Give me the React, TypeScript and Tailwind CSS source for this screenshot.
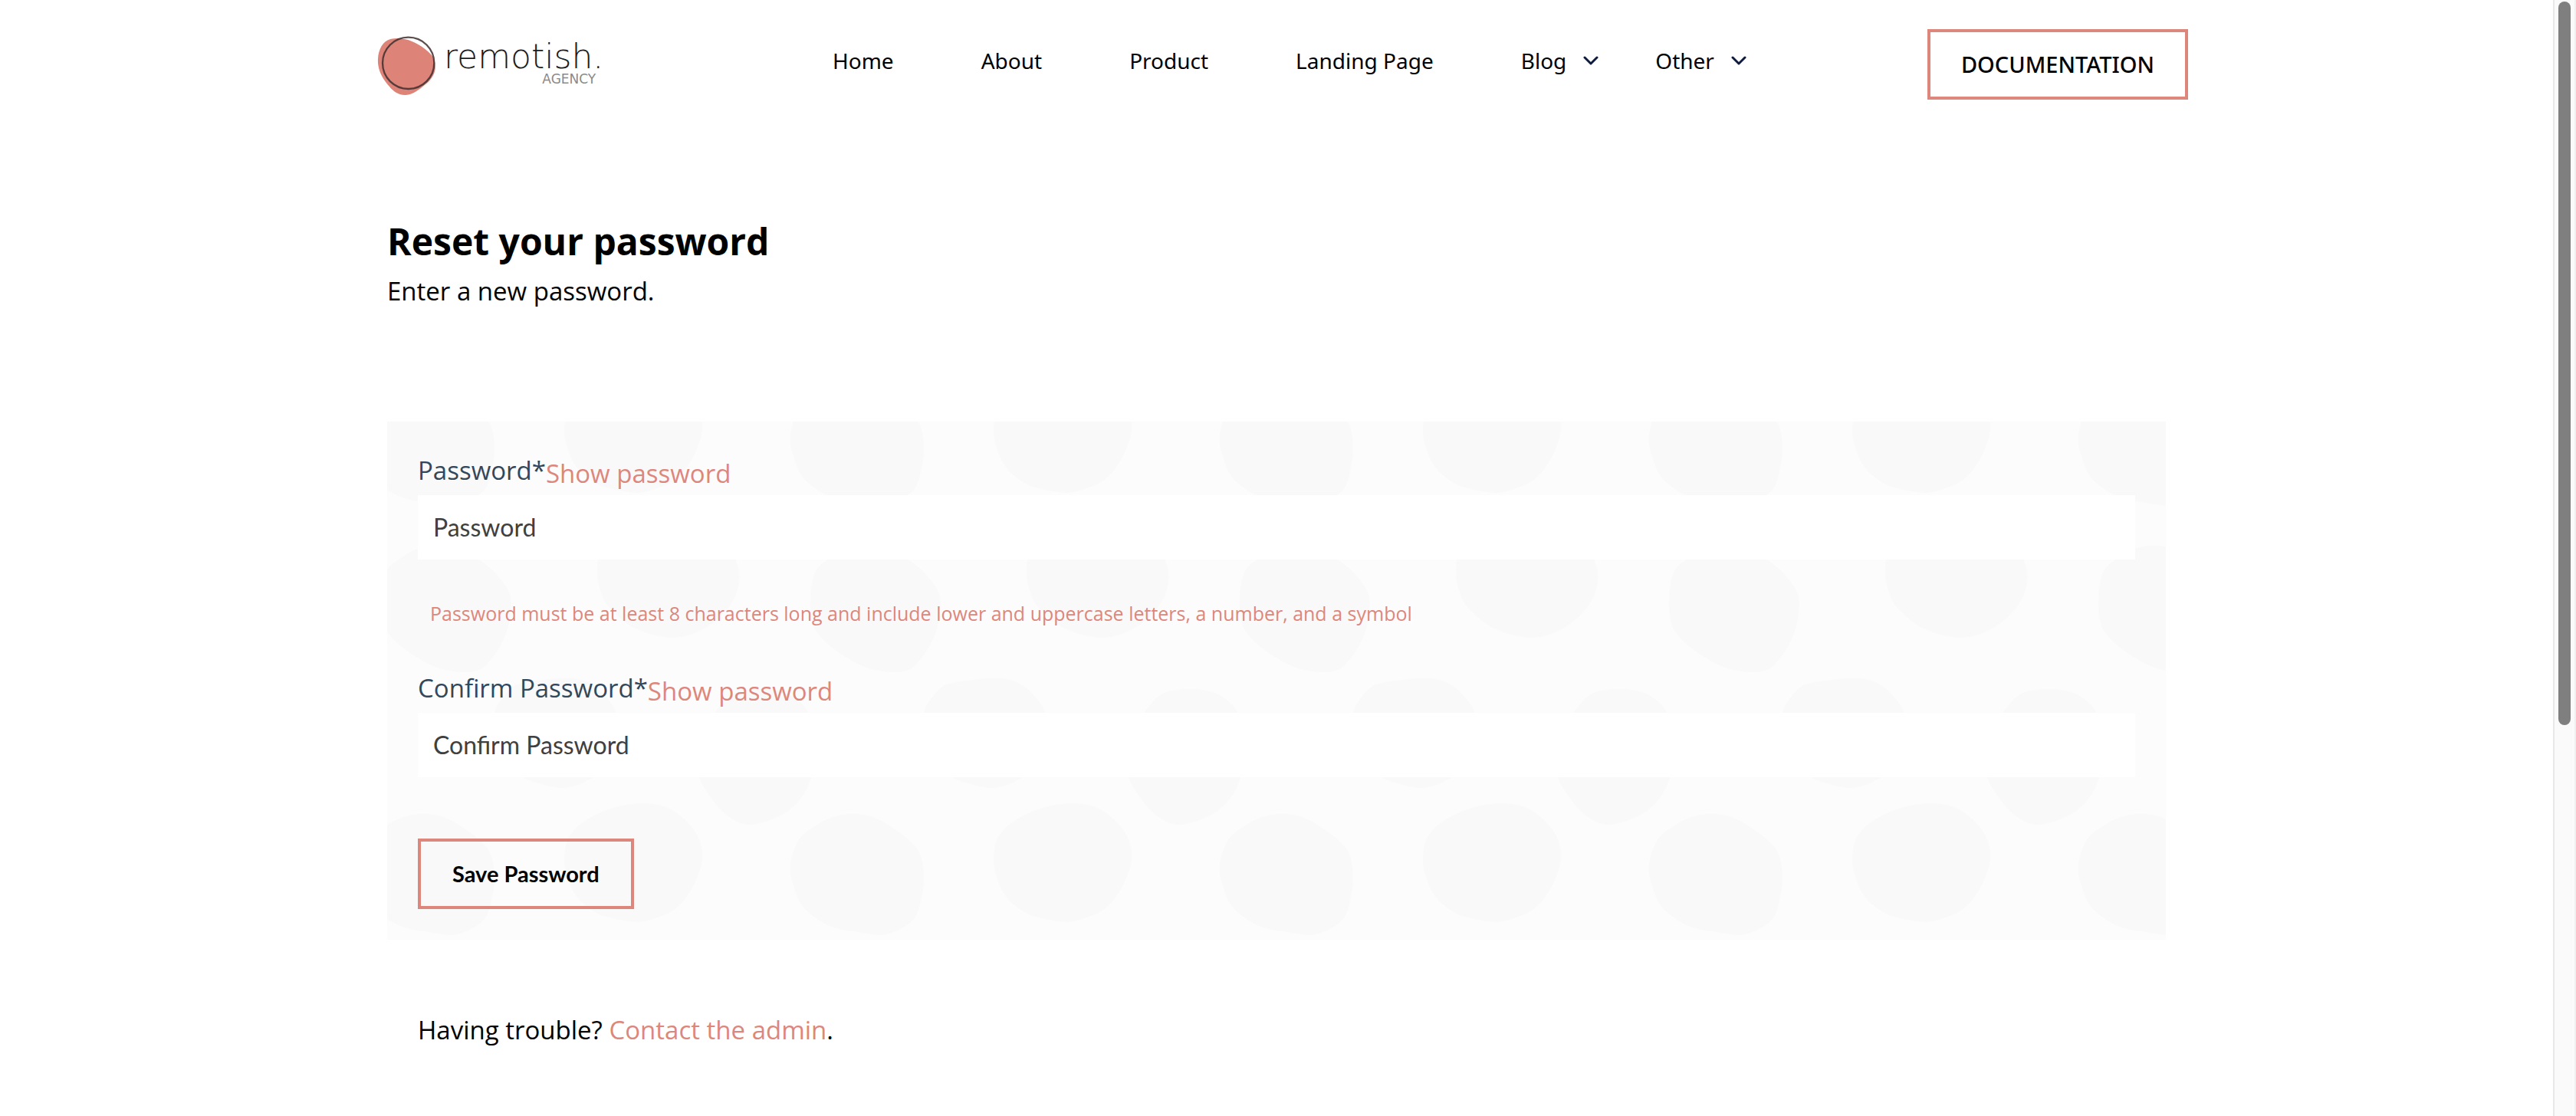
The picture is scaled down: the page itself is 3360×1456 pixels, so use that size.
import { useState } from "react";

type Point = [number, number];

const BLOBS: Point[][] = [
  [[336, 498], [364, 503], [389, 520], [406, 543], [411, 572], [397, 610], [374, 637], [339, 651], [316, 652], [277, 643], [249, 622], [236, 597], [231, 573], [235, 546], [249, 528], [274, 512], [306, 501]],
  [[607, 512], [634, 516], [664, 533], [691, 557], [700, 587], [697, 620], [686, 650], [651, 669], [614, 666], [577, 658], [544, 635], [529, 603], [526, 577], [536, 547], [554, 530], [581, 516]],
  [[274, 193], [278, 220], [290, 243], [324, 270], [374, 282], [417, 268], [447, 240], [459, 210], [455, 182], [435, 148], [400, 122], [355, 116], [310, 125], [282, 155]],
  [[552, 227], [554, 260], [567, 283], [599, 308], [631, 323], [660, 327], [684, 322], [705, 297], [718, 267], [721, 230], [709, 207], [684, 183], [645, 164], [605, 164], [572, 182], [558, 197]],
  [[229, 478], [269, 464], [295, 440], [304, 410], [298, 379], [288, 362], [267, 343], [242, 335], [204, 337], [170, 343], [153, 357], [140, 379], [139, 405], [150, 440], [176, 464]],
  [[492, 349], [517, 353], [535, 363], [549, 379], [556, 410], [557, 440], [553, 464], [542, 488], [517, 512], [474, 526], [445, 515], [424, 493], [407, 464], [405, 430], [414, 398], [428, 379], [444, 360], [463, 351]],
];

/** Closed Catmull-Rom curve through the given points. */
function smoothPath(points: Point[]) {
  const n = points.length;
  const at = (i: number) => points[(i + n) % n];
  let d = `M${points[0][0]} ${points[0][1]}`;
  for (let i = 0; i < n; i++) {
    const [a, b, c, e] = [at(i - 1), at(i), at(i + 1), at(i + 2)];
    d += `C${b[0] + (c[0] - a[0]) / 6} ${b[1] + (c[1] - a[1]) / 6} ${c[0] - (e[0] - b[0]) / 6} ${c[1] - (e[1] - b[1]) / 6} ${c[0]} ${c[1]}`;
  }
  return d + "Z";
}

const BLOB_PATH = BLOBS.map(smoothPath).join("");

function BlobBackground() {
  return (
    <svg className="pointer-events-none absolute inset-0 h-full w-full" aria-hidden="true">
      <defs>
        <pattern id="blobs" width="560" height="560" patternUnits="userSpaceOnUse">
          <g fill="#f9f9f9">
            <path d={BLOB_PATH} />
            <path d={BLOB_PATH} transform="translate(-560 0)" />
            <path d={BLOB_PATH} transform="translate(0 -560)" />
            <path d={BLOB_PATH} transform="translate(-560 -560)" />
          </g>
        </pattern>
      </defs>
      <rect width="100%" height="100%" fill="url(#blobs)" />
    </svg>
  );
}

function Logo() {
  return (
    <a href="#" className="flex w-[594px] shrink-0 items-start gap-2.5" aria-label="remotish agency">
      <svg viewBox="37 48 231 237" className="mt-2 h-[79px] w-[77px]" aria-hidden="true">
        <path
          d="M92 62C112 58 138 60 158 66C192 78 236 104 256 134C266 158 266 176 262 190C254 216 236 234 216 248C192 268 168 282 146 282C112 282 88 256 68 228C48 200 38 170 40 140C42 104 58 70 92 62Z"
          fill="#dd8377"
        />
        <circle cx="159" cy="157" r="101" fill="none" stroke="#3f2f30" strokeOpacity="0.85" strokeWidth="7" />
      </svg>
      <span className="flex flex-col items-end font-['DejaVu_Sans',sans-serif]">
        <span className="mt-2 text-[44px] leading-[56px] font-extralight text-[#1c1c1c]">remotish.</span>
        <span className="-mt-2 mr-2.5 text-[17px] leading-[18px] text-[#8a8a8a]">AGENCY</span>
      </span>
    </a>
  );
}

function Chevron() {
  return (
    <svg viewBox="0 0 20 12" className="h-3 w-5" fill="none" stroke="#0d1b3e" strokeWidth="3" strokeLinecap="round" strokeLinejoin="round" aria-hidden="true">
      <path d="M2 2l8 8 8-8" />
    </svg>
  );
}

function Header() {
  return (
    <header className="mx-auto flex w-full max-w-[2378px] items-start pt-[38px] pl-4">
      <Logo />
      <nav className="flex gap-[114px] pt-[21px] text-[28px] leading-10">
        <a href="#">Home</a>
        <a href="#">About</a>
        <a href="#">Product</a>
        <a href="#">Landing Page</a>
        <div className="flex gap-[74px]">
          <a href="#" className="flex items-center gap-[22px]">Blog <Chevron /></a>
          <a href="#" className="flex items-center gap-[22px]">Other <Chevron /></a>
        </div>
      </nav>
      <a href="#" className="ml-auto flex h-[92px] items-center border-4 border-[#dd877c] px-10 text-[29px] font-medium">
        DOCUMENTATION
      </a>
    </header>
  );
}

function PasswordField({ id, label }: { id: string; label: string }) {
  const [shown, setShown] = useState(false);
  return (
    <div>
      <div className="flex h-[55px] items-start">
        <label htmlFor={id} className="text-[#33475b]">{label}*</label>
        <button type="button" className="mt-1 text-[#dd877c]" onClick={() => setShown(!shown)}>
          Show password
        </button>
      </div>
      <input
        id={id}
        type={shown ? "text" : "password"}
        placeholder={label}
        className="block h-[84px] w-full bg-white px-5 pb-0.5 font-['Lato',sans-serif] text-[32px] text-[#404040] outline-none placeholder:text-[#404040]"
      />
    </div>
  );
}

function Scrollbar() {
  return (
    <div className="w-[30px] shrink-0 border-x-2 border-l-[#e8e8e8] border-r-[#f0f0f0] bg-[#fafafa] pt-0.5" aria-hidden="true">
      <div className="mx-auto h-[944px] w-4 rounded-full bg-[#7f7f7f]" />
    </div>
  );
}

export default function App() {
  return (
    <div className="flex min-h-screen bg-white font-['Noto_Sans','Open_Sans',sans-serif] text-black">
      <div className="min-w-0 flex-1">
        <Header />
        <main className="mx-auto mt-[155px] w-full max-w-[2320px] font-['Open_Sans','Noto_Sans',sans-serif] text-[33px] leading-[45px]">
          <h1 className="text-[48px] leading-[60px] font-bold">Reset your password</h1>
          <p className="mt-3">Enter a new password.</p>
          <form className="relative mt-[148px] bg-[#fcfcfc] px-10 pt-[41px] pb-10" onSubmit={(e) => e.preventDefault()}>
            <BlobBackground />
            <div className="relative">
              <PasswordField id="password" label="Password" />
              <p className="mt-[53px] mb-[58px] pl-4 text-[25px] leading-[34px] text-[#dd877c]">
                Password must be at least 8 characters long and include lower and uppercase letters, a number, and a symbol
              </p>
              <PasswordField id="confirm-password" label="Confirm Password" />
              <button type="submit" className="mt-20 block h-[92px] border-4 border-[#dd877c] px-[41px] pb-0.5 font-['Lato',sans-serif] text-[29px] font-bold">
                Save Password
              </button>
            </div>
          </form>
          <p className="mt-[95px] px-10">
            Having trouble? <a href="#" className="text-[#dd877c]">Contact the admin</a>.
          </p>
        </main>
      </div>
      <Scrollbar />
    </div>
  );
}
